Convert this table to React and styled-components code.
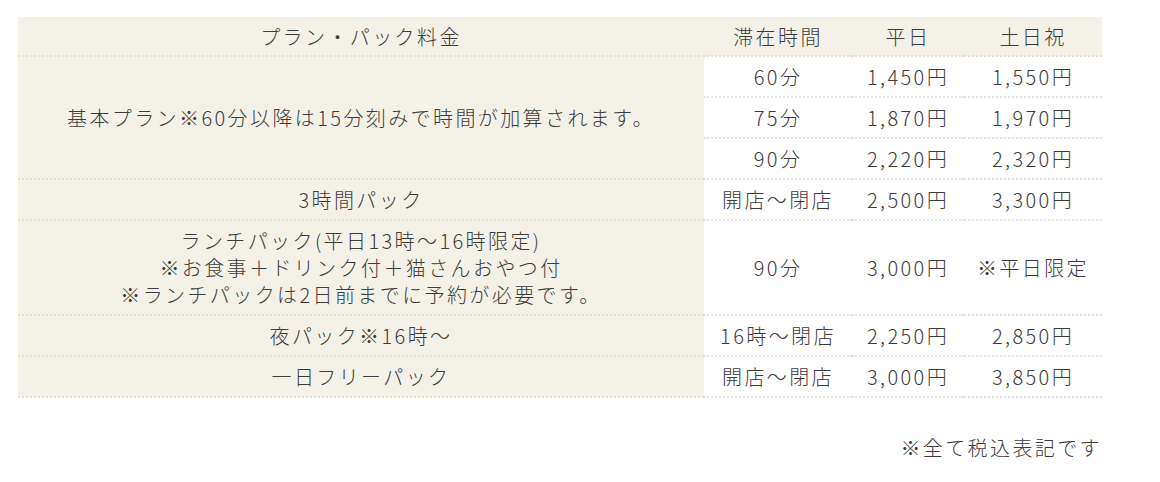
import React from "react";
import styled, { createGlobalStyle } from "styled-components";

const GlobalStyle = createGlobalStyle`
  body {
    margin: 0;
    background: #fff;
    font-family: "Noto Sans CJK JP", "Noto Sans", sans-serif;
    font-weight: 300;
    color: #3c3c3c;
  }
`;

const Wrapper = styled.div`
  width: 1084px;
  padding: 17px 0 0 18px;
`;

const Table = styled.table`
  width: 1084px;
  border-collapse: collapse;
  table-layout: fixed;
  font-size: 20px;
  line-height: 27px;
  letter-spacing: 2.4px;
`;

const Head = styled.th`
  background: #f4f2e8;
  font-weight: 300;
  text-align: center;
  padding: 6px 0 5px;
  border-bottom: 2px dotted #e2e0d8;
`;

const PlanCell = styled.td`
  background: #f4f2e8;
  text-align: center;
  vertical-align: middle;
  padding: 6px 0;
  border-bottom: 2px dotted #e2e0d8;
`;

const Cell = styled.td`
  background: #fff;
  text-align: center;
  vertical-align: middle;
  padding: 6px 0;
  border-bottom: 2px dotted #e4e4e4;
`;

const Note = styled.p`
  margin: 36px 0 0;
  text-align: right;
  font-size: 20px;
  line-height: 27px;
  letter-spacing: 2.4px;
`;

const basic = [
  ["60分", "1,450円", "1,550円"],
  ["75分", "1,870円", "1,970円"],
  ["90分", "2,220円", "2,320円"],
];

const packs = [
  { plan: ["3時間パック"], time: "開店～閉店", weekday: "2,500円", holiday: "3,300円" },
  {
    plan: [
      "ランチパック(平日13時～16時限定)",
      "※お食事＋ドリンク付＋猫さんおやつ付",
      "※ランチパックは2日前までに予約が必要です。",
    ],
    time: "90分",
    weekday: "3,000円",
    holiday: "※平日限定",
  },
  { plan: ["夜パック※16時～"], time: "16時～閉店", weekday: "2,250円", holiday: "2,850円" },
  { plan: ["一日フリーパック"], time: "開店～閉店", weekday: "3,000円", holiday: "3,850円" },
];

export default function App() {
  return (
    <>
      <GlobalStyle />
      <Wrapper>
        <Table>
          <colgroup>
            <col style={{ width: 686 }} />
            <col style={{ width: 148 }} />
            <col style={{ width: 112 }} />
            <col style={{ width: 138 }} />
          </colgroup>
          <thead>
            <tr>
              <Head>プラン・パック料金</Head>
              <Head>滞在時間</Head>
              <Head>平日</Head>
              <Head>土日祝</Head>
            </tr>
          </thead>
          <tbody>
            {basic.map((row, i) => (
              <tr key={row[0]}>
                {i === 0 && (
                  <PlanCell rowSpan={3}>
                    基本プラン※60分以降は15分刻みで時間が加算されます。
                  </PlanCell>
                )}
                <Cell>{row[0]}</Cell>
                <Cell>{row[1]}</Cell>
                <Cell>{row[2]}</Cell>
              </tr>
            ))}
            {packs.map((p) => (
              <tr key={p.plan[0]}>
                <PlanCell>
                  {p.plan.map((line, i) => (
                    <React.Fragment key={line}>
                      {i > 0 && <br />}
                      {line}
                    </React.Fragment>
                  ))}
                </PlanCell>
                <Cell>{p.time}</Cell>
                <Cell>{p.weekday}</Cell>
                <Cell>{p.holiday}</Cell>
              </tr>
            ))}
          </tbody>
        </Table>
        <Note>※全て税込表記です</Note>
      </Wrapper>
    </>
  );
}
